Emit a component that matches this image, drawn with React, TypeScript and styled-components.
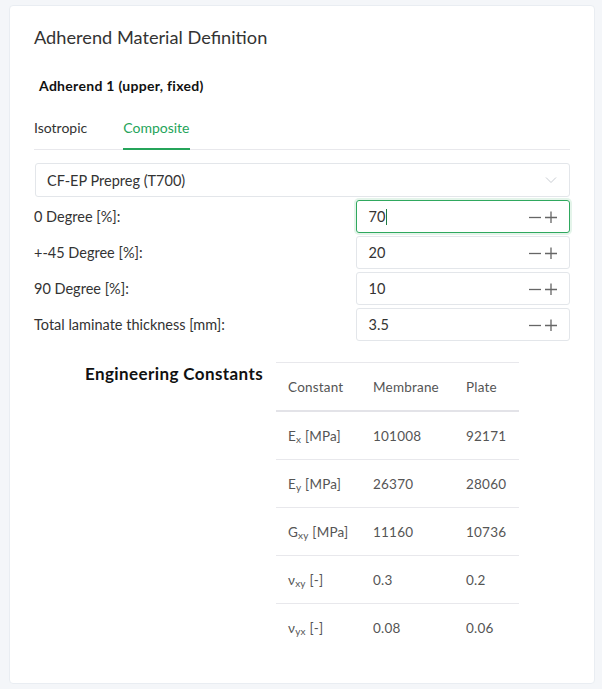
import React from "react"
import styled, { createGlobalStyle } from 'styled-components';

// Styled Components ======================================================

const GlobalStyle = createGlobalStyle`
    body {
        margin: 0;
        background: #f4f6f9;
        font-family: "Lato", "Noto Sans", sans-serif;
        color: #333;
    }
`;

const Card = styled.div`
    box-sizing: border-box;
    width: 586px;
    height: 679px;
    margin: 5px 0 0 9px;
    padding: 21px 24px 0 24px;
    background: #fff;
    border: 1px solid #e9edf2;
    border-radius: 4px;
`;

const Title = styled.div`
    font-size: 18.2px;
    line-height: 20px;
    color: #333;
    margin-bottom: 31px;
`;

const SubTitle = styled.div`
    font-size: 14px;
    font-weight: 700;
    letter-spacing: 0.3px;
    line-height: 16px;
    color: #111;
    padding-left: 5px;
    margin-bottom: 24px;
`;

const Tabs = styled.div`
    display: flex;
    gap: 36px;
    border-bottom: 1px solid #e8e8ec;
    margin-bottom: 13px;
`;

const Tab = styled.div<{ $active?: boolean }>`
    font-size: 14px;
    line-height: 18px;
    padding-top: 1px;
    padding-bottom: 11px;
    margin-bottom: -1px;
    color: ${p => p.$active ? '#25a45a' : '#333'};
    border-bottom: 2px solid ${p => p.$active ? '#25a45a' : 'transparent'};
`;

const Stack = styled.div`
    display: flex;
    flex-direction: column;
    gap: 3px;
`;

const Select = styled.div`
    box-sizing: border-box;
    height: 34px;
    display: flex;
    align-items: center;
    justify-content: space-between;
    padding: 0 12px 0 11px;
    margin-left: 1px;
    border: 1px solid #e3e6ea;
    border-radius: 3px;
    font-size: 14.5px;
    color: #333;
`;

const Row = styled.div`
    display: grid;
    grid-template-columns: 60% 40%;
    align-items: center;
`;

const Label = styled.div`
    font-size: 14.5px;
    color: #333;
`;

const Field = styled.div<{ $focused?: boolean }>`
    box-sizing: border-box;
    height: 33px;
    display: flex;
    align-items: center;
    padding: 0 12px 0 12px;
    border: 1px solid ${p => p.$focused ? '#2fa85e' : '#e3e6ea'};
    border-radius: 3px;
    box-shadow: ${p => p.$focused ? '0 0 0 2px rgba(47,168,94,0.13)' : 'none'};
    font-size: 14.5px;
    color: #333;
`;

const Value = styled.span`
    flex: 1;
    display: flex;
    align-items: center;
`;

const Caret = styled.span`
    display: inline-block;
    width: 1px;
    height: 16px;
    background: #1d7a44;
    margin-left: 1px;
`;

const StepButtons = styled.div`
    display: flex;
    gap: 4px;
    color: #555;
`;

const Lower = styled.div`
    display: flex;
    justify-content: center;
    gap: 13px;
    margin-top: 21px;
`;

const SectionTitle = styled.div`
    font-size: 17px;
    font-weight: 700;
    letter-spacing: 0.4px;
    line-height: 24px;
    color: #111;
`;

const Table = styled.table`
    border-collapse: collapse;
    table-layout: fixed;
    width: 243px;
    font-size: 13.5px;
    letter-spacing: 0.2px;
    color: #555;
    border-top: 1px solid #e8e8ec;

    th {
        font-weight: 400;
        text-align: left;
        height: 47px;
        padding: 0 12px;
        border-bottom: 2px solid #e3e3e8;
    }
    td {
        height: 47px;
        padding: 0 12px;
        border-bottom: 1px solid #e8e8ec;
    }
    tr:last-child td {
        border-bottom: none;
    }
    sub {
        font-size: 10px;
        vertical-align: -2px;
        line-height: 0;
    }
`;

const Col = styled.col<{ $w: number }>`
    width: ${p => p.$w}px;
`;

// =========================================================================

function Stepper() {
    return (
        <StepButtons>
            <svg width="12" height="12" viewBox="0 0 12 12"><path d="M0 6.5h12" stroke="#666" strokeWidth="1.3" /></svg>
            <svg width="12" height="12" viewBox="0 0 12 12"><path d="M0 6.5h12M6 0.5v12" stroke="#666" strokeWidth="1.3" /></svg>
        </StepButtons>
    );
}

const inputs = [
    { label: '0 Degree [%]:', value: '70', focused: true },
    { label: '+-45 Degree [%]:', value: '20' },
    { label: '90 Degree [%]:', value: '10' },
    { label: 'Total laminate thickness [mm]:', value: '3.5' },
];

const constants = [
    { sym: 'E', sub: 'x', unit: '[MPa]', membrane: '101008', plate: '92171' },
    { sym: 'E', sub: 'y', unit: '[MPa]', membrane: '26370', plate: '28060' },
    { sym: 'G', sub: 'xy', unit: '[MPa]', membrane: '11160', plate: '10736' },
    { sym: 'ν', sub: 'xy', unit: '[-]', membrane: '0.3', plate: '0.2' },
    { sym: 'ν', sub: 'yx', unit: '[-]', membrane: '0.08', plate: '0.06' },
];

export default function App() {
    return (
        <>
            <GlobalStyle />
            <Card>
                <Title>Adherend Material Definition</Title>
                <SubTitle>Adherend 1 (upper, fixed)</SubTitle>
                <Tabs>
                    <Tab>Isotropic</Tab>
                    <Tab $active>Composite</Tab>
                </Tabs>
                <Stack>
                    <Select>
                        <span>CF-EP Prepreg (T700)</span>
                        <svg width="12" height="8" viewBox="0 0 12 8"><path d="M1 1.5l5 5 5-5" fill="none" stroke="#c8ccd2" strokeWidth="1" /></svg>
                    </Select>
                    {inputs.map(i => (
                        <Row key={i.label}>
                            <Label>{i.label}</Label>
                            <Field $focused={i.focused}>
                                <Value>{i.value}{i.focused && <Caret />}</Value>
                                <Stepper />
                            </Field>
                        </Row>
                    ))}
                </Stack>
                <Lower>
                    <SectionTitle>Engineering Constants</SectionTitle>
                    <Table>
                        <colgroup>
                            <Col $w={85} />
                            <Col $w={93} />
                            <Col $w={65} />
                        </colgroup>
                        <thead>
                            <tr>
                                <th>Constant</th>
                                <th>Membrane</th>
                                <th>Plate</th>
                            </tr>
                        </thead>
                        <tbody>
                            {constants.map(c => (
                                <tr key={c.sym + c.sub}>
                                    <td>{c.sym}<sub>{c.sub}</sub> {c.unit}</td>
                                    <td>{c.membrane}</td>
                                    <td>{c.plate}</td>
                                </tr>
                            ))}
                        </tbody>
                    </Table>
                </Lower>
            </Card>
        </>
    );
}
